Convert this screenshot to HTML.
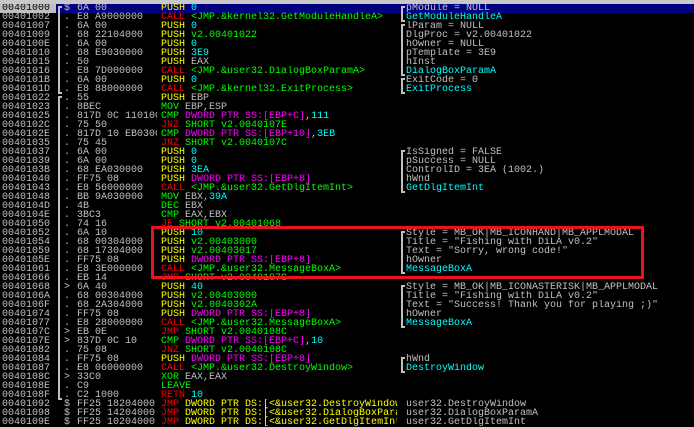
<!DOCTYPE html>
<html><head><meta charset="utf-8"><style>
html,body{margin:0;padding:0;background:#000;width:694px;height:427px;overflow:hidden}
body{position:relative;font-family:"Liberation Mono",monospace;font-size:10px;color:#c0c0c0}
.top{position:absolute;left:0;top:0;width:694px;height:4px;background:#c8c8c8}
.r{position:absolute;left:0;width:694px;height:9px;white-space:pre}
.r span{position:absolute;top:-1px;height:11px;line-height:11px;overflow:hidden}
.a{left:2px;width:54px}
.k{left:64px}
.h{left:77px;width:80px}
.d{left:161px;width:236px}
.c{left:406px}
.sel{background:#000080}
.sel .a{background:#c0c0c0;color:#000;left:0;padding-left:2px;top:0;height:9px;line-height:10px}
i{font-style:normal}
.y{color:#ffff00}.R{color:#ff0000}.g{color:#00ff00}.m{color:#ff00ff}.C{color:#00ffff}.w{color:#c0c0c0}
.b{position:absolute;border:2px solid #c0c0c0;border-right:none;width:2px}
.box{position:absolute;left:151px;top:226px;width:487px;height:47px;border:3px solid #e8141c}
</style></head><body>
<div class="top"></div>
<div class="r sel" style="top:4px"><span class="a">00401000</span><span class="k">$</span><span class="h">6A 00</span><span class="d"><i class="y">PUSH</i> <i class="C">0</i></span><span class="c">pModule = NULL</span></div>
<div class="r" style="top:13px"><span class="a">00401002</span><span class="k">.</span><span class="h">E8 A9000000</span><span class="d"><i class="R">CALL</i> <i class="g">&lt;JMP.&amp;kernel32.GetModuleHandleA&gt;</i></span><span class="c C">GetModuleHandleA</span></div>
<div class="r" style="top:22px"><span class="a">00401007</span><span class="k">.</span><span class="h">6A 00</span><span class="d"><i class="y">PUSH</i> <i class="C">0</i></span><span class="c">lParam = NULL</span></div>
<div class="r" style="top:31px"><span class="a">00401009</span><span class="k">.</span><span class="h">68 22104000</span><span class="d"><i class="y">PUSH</i> <i class="g">v2.00401022</i></span><span class="c">DlgProc = v2.00401022</span></div>
<div class="r" style="top:40px"><span class="a">0040100E</span><span class="k">.</span><span class="h">6A 00</span><span class="d"><i class="y">PUSH</i> <i class="C">0</i></span><span class="c">hOwner = NULL</span></div>
<div class="r" style="top:49px"><span class="a">00401010</span><span class="k">.</span><span class="h">68 E9030000</span><span class="d"><i class="y">PUSH</i> <i class="C">3E9</i></span><span class="c">pTemplate = 3E9</span></div>
<div class="r" style="top:58px"><span class="a">00401015</span><span class="k">.</span><span class="h">50</span><span class="d"><i class="y">PUSH</i> EAX</span><span class="c">hInst</span></div>
<div class="r" style="top:67px"><span class="a">00401016</span><span class="k">.</span><span class="h">E8 7D000000</span><span class="d"><i class="R">CALL</i> <i class="g">&lt;JMP.&amp;user32.DialogBoxParamA&gt;</i></span><span class="c C">DialogBoxParamA</span></div>
<div class="r" style="top:76px"><span class="a">0040101B</span><span class="k">.</span><span class="h">6A 00</span><span class="d"><i class="y">PUSH</i> <i class="C">0</i></span><span class="c">ExitCode = 0</span></div>
<div class="r" style="top:85px"><span class="a">0040101D</span><span class="k">.</span><span class="h">E8 88000000</span><span class="d"><i class="R">CALL</i> <i class="g">&lt;JMP.&amp;kernel32.ExitProcess&gt;</i></span><span class="c C">ExitProcess</span></div>
<div class="r" style="top:94px"><span class="a">00401022</span><span class="k">.</span><span class="h">55</span><span class="d"><i class="y">PUSH</i> EBP</span></div>
<div class="r" style="top:103px"><span class="a">00401023</span><span class="k">.</span><span class="h">8BEC</span><span class="d"><i class="g">MOV</i> EBP,ESP</span></div>
<div class="r" style="top:112px"><span class="a">00401025</span><span class="k">.</span><span class="h">817D 0C 11010000</span><span class="d"><i class="g">CMP</i> <i class="m">DWORD PTR SS:[EBP+C]</i>,<i class="C">111</i></span></div>
<div class="r" style="top:121px"><span class="a">0040102C</span><span class="k">.</span><span class="h">75 50</span><span class="d"><i class="R">JNZ</i> <i class="g">SHORT v2.0040107E</i></span></div>
<div class="r" style="top:130px"><span class="a">0040102E</span><span class="k">.</span><span class="h">817D 10 EB030000</span><span class="d"><i class="g">CMP</i> <i class="m">DWORD PTR SS:[EBP+10]</i>,<i class="C">3EB</i></span></div>
<div class="r" style="top:139px"><span class="a">00401035</span><span class="k">.</span><span class="h">75 45</span><span class="d"><i class="R">JNZ</i> <i class="g">SHORT v2.0040107C</i></span></div>
<div class="r" style="top:148px"><span class="a">00401037</span><span class="k">.</span><span class="h">6A 00</span><span class="d"><i class="y">PUSH</i> <i class="C">0</i></span><span class="c">IsSigned = FALSE</span></div>
<div class="r" style="top:157px"><span class="a">00401039</span><span class="k">.</span><span class="h">6A 00</span><span class="d"><i class="y">PUSH</i> <i class="C">0</i></span><span class="c">pSuccess = NULL</span></div>
<div class="r" style="top:166px"><span class="a">0040103B</span><span class="k">.</span><span class="h">68 EA030000</span><span class="d"><i class="y">PUSH</i> <i class="C">3EA</i></span><span class="c">ControlID = 3EA (1002.)</span></div>
<div class="r" style="top:175px"><span class="a">00401040</span><span class="k">.</span><span class="h">FF75 08</span><span class="d"><i class="y">PUSH</i> <i class="m">DWORD PTR SS:[EBP+8]</i></span><span class="c">hWnd</span></div>
<div class="r" style="top:184px"><span class="a">00401043</span><span class="k">.</span><span class="h">E8 56000000</span><span class="d"><i class="R">CALL</i> <i class="g">&lt;JMP.&amp;user32.GetDlgItemInt&gt;</i></span><span class="c C">GetDlgItemInt</span></div>
<div class="r" style="top:193px"><span class="a">00401048</span><span class="k">.</span><span class="h">BB 9A030000</span><span class="d"><i class="g">MOV</i> EBX,<i class="C">39A</i></span></div>
<div class="r" style="top:202px"><span class="a">0040104D</span><span class="k">.</span><span class="h">4B</span><span class="d"><i class="g">DEC</i> EBX</span></div>
<div class="r" style="top:211px"><span class="a">0040104E</span><span class="k">.</span><span class="h">3BC3</span><span class="d"><i class="g">CMP</i> EAX,EBX</span></div>
<div class="r" style="top:220px"><span class="a">00401050</span><span class="k">.</span><span class="h">74 16</span><span class="d"><i class="R">JE</i> <i class="g">SHORT v2.00401068</i></span></div>
<div class="r" style="top:229px"><span class="a">00401052</span><span class="k">.</span><span class="h">6A 10</span><span class="d"><i class="y">PUSH</i> <i class="C">10</i></span><span class="c">Style = MB_OK|MB_ICONHAND|MB_APPLMODAL</span></div>
<div class="r" style="top:238px"><span class="a">00401054</span><span class="k">.</span><span class="h">68 00304000</span><span class="d"><i class="y">PUSH</i> <i class="g">v2.00403000</i></span><span class="c">Title = "Fishing with DiLA v0.2"</span></div>
<div class="r" style="top:247px"><span class="a">00401059</span><span class="k">.</span><span class="h">68 17304000</span><span class="d"><i class="y">PUSH</i> <i class="g">v2.00403017</i></span><span class="c">Text = "Sorry, wrong code!"</span></div>
<div class="r" style="top:256px"><span class="a">0040105E</span><span class="k">.</span><span class="h">FF75 08</span><span class="d"><i class="y">PUSH</i> <i class="m">DWORD PTR SS:[EBP+8]</i></span><span class="c">hOwner</span></div>
<div class="r" style="top:265px"><span class="a">00401061</span><span class="k">.</span><span class="h">E8 3E000000</span><span class="d"><i class="R">CALL</i> <i class="g">&lt;JMP.&amp;user32.MessageBoxA&gt;</i></span><span class="c C">MessageBoxA</span></div>
<div class="r" style="top:274px"><span class="a">00401066</span><span class="k">.</span><span class="h">EB 14</span><span class="d"><i class="R">JMP</i> <i class="g">SHORT v2.0040107C</i></span></div>
<div class="r" style="top:283px"><span class="a">00401068</span><span class="k">&gt;</span><span class="h">6A 40</span><span class="d"><i class="y">PUSH</i> <i class="C">40</i></span><span class="c">Style = MB_OK|MB_ICONASTERISK|MB_APPLMODAL</span></div>
<div class="r" style="top:292px"><span class="a">0040106A</span><span class="k">.</span><span class="h">68 00304000</span><span class="d"><i class="y">PUSH</i> <i class="g">v2.00403000</i></span><span class="c">Title = "Fishing with DiLA v0.2"</span></div>
<div class="r" style="top:301px"><span class="a">0040106F</span><span class="k">.</span><span class="h">68 2A304000</span><span class="d"><i class="y">PUSH</i> <i class="g">v2.0040302A</i></span><span class="c">Text = "Success! Thank you for playing ;)"</span></div>
<div class="r" style="top:310px"><span class="a">00401074</span><span class="k">.</span><span class="h">FF75 08</span><span class="d"><i class="y">PUSH</i> <i class="m">DWORD PTR SS:[EBP+8]</i></span><span class="c">hOwner</span></div>
<div class="r" style="top:319px"><span class="a">00401077</span><span class="k">.</span><span class="h">E8 28000000</span><span class="d"><i class="R">CALL</i> <i class="g">&lt;JMP.&amp;user32.MessageBoxA&gt;</i></span><span class="c C">MessageBoxA</span></div>
<div class="r" style="top:328px"><span class="a">0040107C</span><span class="k">&gt;</span><span class="h">EB 0E</span><span class="d"><i class="R">JMP</i> <i class="g">SHORT v2.0040108C</i></span></div>
<div class="r" style="top:337px"><span class="a">0040107E</span><span class="k">&gt;</span><span class="h">837D 0C 10</span><span class="d"><i class="g">CMP</i> <i class="m">DWORD PTR SS:[EBP+C]</i>,<i class="C">10</i></span></div>
<div class="r" style="top:346px"><span class="a">00401082</span><span class="k">.</span><span class="h">75 08</span><span class="d"><i class="R">JNZ</i> <i class="g">SHORT v2.0040108C</i></span></div>
<div class="r" style="top:355px"><span class="a">00401084</span><span class="k">.</span><span class="h">FF75 08</span><span class="d"><i class="y">PUSH</i> <i class="m">DWORD PTR SS:[EBP+8]</i></span><span class="c">hWnd</span></div>
<div class="r" style="top:364px"><span class="a">00401087</span><span class="k">.</span><span class="h">E8 06000000</span><span class="d"><i class="R">CALL</i> <i class="g">&lt;JMP.&amp;user32.DestroyWindow&gt;</i></span><span class="c C">DestroyWindow</span></div>
<div class="r" style="top:373px"><span class="a">0040108C</span><span class="k">&gt;</span><span class="h">33C0</span><span class="d"><i class="g">XOR</i> EAX,EAX</span></div>
<div class="r" style="top:382px"><span class="a">0040108E</span><span class="k">.</span><span class="h">C9</span><span class="d"><i class="g">LEAVE</i></span></div>
<div class="r" style="top:391px"><span class="a">0040108F</span><span class="k">.</span><span class="h">C2 1000</span><span class="d"><i class="R">RETN</i> <i class="C">10</i></span></div>
<div class="r" style="top:400px"><span class="a">00401092</span><span class="k">$</span><span class="h">FF25 18204000</span><span class="d"><i class="R">JMP</i> <i class="y">DWORD PTR DS:[&lt;&amp;user32.DestroyWindow&gt;]</i></span><span class="c">user32.DestroyWindow</span></div>
<div class="r" style="top:409px"><span class="a">00401098</span><span class="k">$</span><span class="h">FF25 14204000</span><span class="d"><i class="R">JMP</i> <i class="y">DWORD PTR DS:[&lt;&amp;user32.DialogBoxParamA&gt;]</i></span><span class="c">user32.DialogBoxParamA</span></div>
<div class="r" style="top:418px"><span class="a">0040109E</span><span class="k">$</span><span class="h">FF25 10204000</span><span class="d"><i class="R">JMP</i> <i class="y">DWORD PTR DS:[&lt;&amp;user32.GetDlgItemInt&gt;]</i></span><span class="c">user32.GetDlgItemInt</span></div>

<div class="b" style="left:58px;top:6px;height:84px"></div>
<div class="b" style="left:58px;top:96px;height:300px"></div>
<div class="b" style="left:401px;top:6px;height:12px"></div>
<div class="b" style="left:401px;top:24px;height:48px"></div>
<div class="b" style="left:401px;top:78px;height:12px"></div>
<div class="b" style="left:401px;top:150px;height:39px"></div>
<div class="b" style="left:401px;top:231px;height:39px"></div>
<div class="b" style="left:401px;top:285px;height:39px"></div>
<div class="b" style="left:401px;top:357px;height:12px"></div>

<div class="box"></div>
</body></html>
